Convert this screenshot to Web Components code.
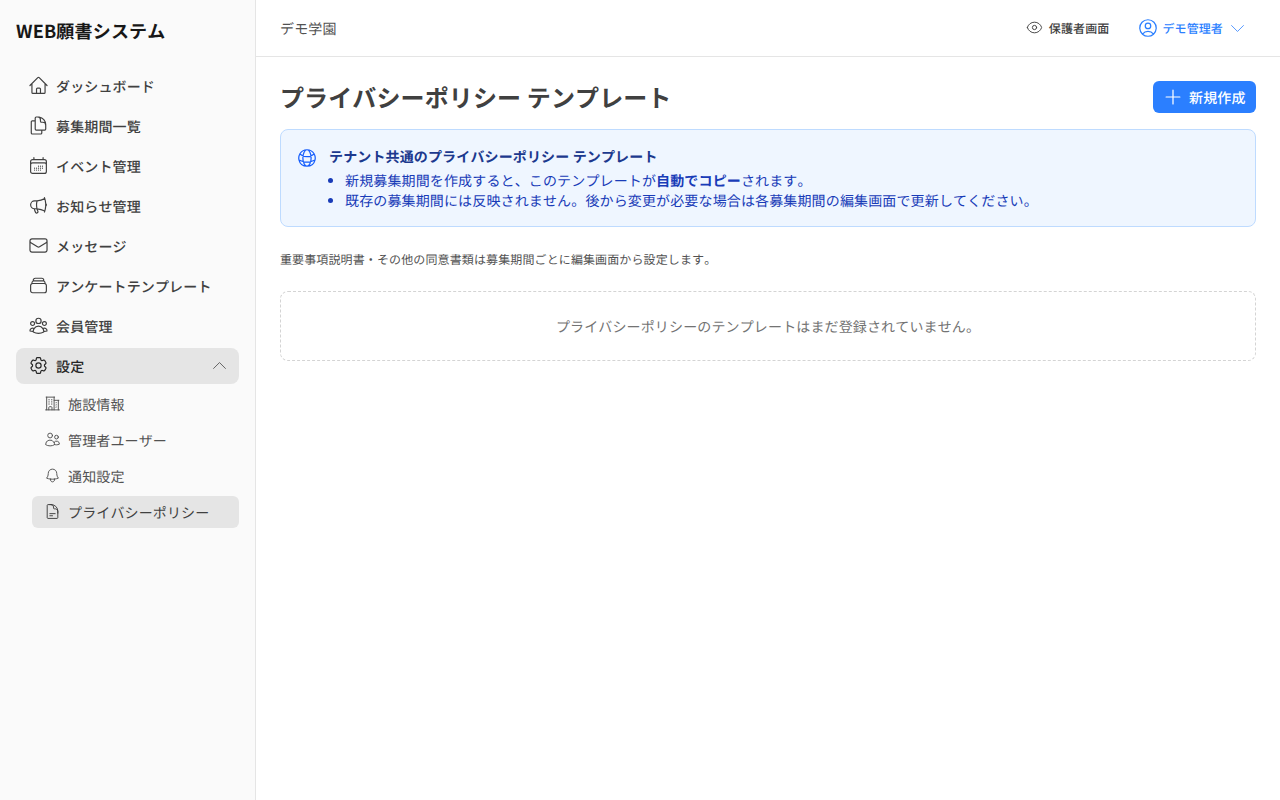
<!DOCTYPE html>
<html lang="ja"><head><meta charset="utf-8"><title>WEB願書システム</title>
<style>
html,body{margin:0;height:100%;background:#fff;font-family:"Noto Sans CJK JP","Noto Sans",sans-serif;color:#404040;font-kerning:none;text-rendering:geometricPrecision;text-spacing-trim:space-all}
</style></head><body>
<app-shell>
  <side-bar slot="side"></side-bar>
  <top-bar slot="top"></top-bar>
  <page-title slot="main"></page-title>
  <info-box slot="main"></info-box>
  <hint-text slot="main"></hint-text>
  <empty-box slot="main"></empty-box>
</app-shell>
<script>
const ic=(body,size=18,sw=1.35)=>`<svg xmlns="http://www.w3.org/2000/svg" width="${size}" height="${size}" viewBox="0 0 24 24" fill="none" stroke="currentColor" stroke-width="${sw}" stroke-linecap="round" stroke-linejoin="round">${body}</svg>`;
const P={
home:'<path d="m2.25 12 8.954-8.955c.44-.439 1.152-.439 1.591 0L21.75 12M4.5 9.75v10.125c0 .621.504 1.125 1.125 1.125H9.75v-4.875c0-.621.504-1.125 1.125-1.125h2.25c.621 0 1.125.504 1.125 1.125V21h4.125c.621 0 1.125-.504 1.125-1.125V9.75M8.25 21h8.25"/>',
docs:'<path d="M15.75 17.25v3.375c0 .621-.504 1.125-1.125 1.125h-9.75a1.125 1.125 0 0 1-1.125-1.125V7.875c0-.621.504-1.125 1.125-1.125H6.75a9.06 9.06 0 0 1 1.5.124m7.5 10.376h3.375c.621 0 1.125-.504 1.125-1.125V11.25c0-4.46-3.243-8.161-7.5-8.876a9.06 9.06 0 0 0-1.5-.124H9.375c-.621 0-1.125.504-1.125 1.125v3.5m7.5 10.375H9.375a1.125 1.125 0 0 1-1.125-1.125v-9.25m12 6.625v-1.875a3.375 3.375 0 0 0-3.375-3.375h-1.5a1.125 1.125 0 0 1-1.125-1.125v-1.5a3.375 3.375 0 0 0-3.375-3.375H9.75"/>',
cal:'<path d="M6.75 3v2.25M17.25 3v2.25M3 18.75V7.5a2.25 2.25 0 0 1 2.25-2.25h13.5A2.25 2.25 0 0 1 21 7.5v11.25m-18 0A2.25 2.25 0 0 0 5.25 21h13.5A2.25 2.25 0 0 0 21 18.75m-18 0v-7.5A2.25 2.25 0 0 1 5.25 9h13.5A2.25 2.25 0 0 1 21 11.25v7.5m-9-6h.008v.008H12v-.008ZM12 15h.008v.008H12V15Zm0 2.25h.008v.008H12v-.008ZM9.75 15h.008v.008H9.75V15Zm0 2.25h.008v.008H9.75v-.008ZM7.5 15h.008v.008H7.5V15Zm0 2.25h.008v.008H7.5v-.008Zm6.75-4.5h.008v.008h-.008v-.008Zm0 2.25h.008v.008h-.008V15Zm0 2.25h.008v.008h-.008v-.008Zm2.25-4.5h.008v.008H16.5v-.008Zm0 2.25h.008V15H16.5V15Z"/>',
mega:'<path d="M10.34 15.84c-.688-.06-1.386-.09-2.09-.09H7.5a4.5 4.5 0 1 1 0-9h.75c.704 0 1.402-.03 2.09-.09m0 9.18c.253.962.584 1.892.985 2.783.247.55.06 1.21-.463 1.511l-.657.38c-.551.318-1.26.117-1.527-.461a20.845 20.845 0 0 1-1.44-4.282m3.102.069a18.03 18.03 0 0 1-.59-4.59c0-1.586.205-3.124.59-4.59m0 9.18a23.848 23.848 0 0 1 8.835 2.535M10.34 6.66a23.847 23.847 0 0 0 8.835-2.535m0 0A23.74 23.74 0 0 0 18.795 3m.38 1.125a23.91 23.91 0 0 1 1.014 5.395m-1.014 8.855c-.118.38-.245.754-.38 1.125m.38-1.125a23.91 23.91 0 0 0 1.014-5.395m0-3.46c.495.413.811 1.035.811 1.73 0 .695-.316 1.317-.811 1.73m0-3.46a24.347 24.347 0 0 1 0 3.46"/>',
mail:'<path d="M21.75 6.75v10.5a2.25 2.25 0 0 1-2.25 2.25h-15a2.25 2.25 0 0 1-2.25-2.25V6.75m19.5 0A2.25 2.25 0 0 0 19.5 4.5h-15a2.25 2.25 0 0 0-2.25 2.25m19.5 0v.243a2.25 2.25 0 0 1-1.07 1.916l-7.5 4.615a2.25 2.25 0 0 1-2.36 0L3.32 8.91a2.25 2.25 0 0 1-1.07-1.916V6.75"/>',
stack:'<path d="M6 6.878V6a2.25 2.25 0 0 1 2.25-2.25h7.5A2.25 2.25 0 0 1 18 6v.878m-12 0c.235-.083.487-.128.75-.128h10.5c.263 0 .515.045.75.128m-12 0A2.25 2.25 0 0 0 4.5 9v.878m13.5-3A2.25 2.25 0 0 1 19.5 9v.878m0 0a2.246 2.246 0 0 0-.75-.128H5.25c-.263 0-.515.045-.75.128m15 0A2.25 2.25 0 0 1 21 12v6a2.25 2.25 0 0 1-2.25 2.25H5.25A2.25 2.25 0 0 1 3 18v-6c0-.98.626-1.813 1.5-2.122"/>',
group:'<path d="M18 18.72a9.094 9.094 0 0 0 3.741-.479 3 3 0 0 0-4.682-2.72m.94 3.198.001.031c0 .225-.012.447-.037.666A11.944 11.944 0 0 1 12 21c-2.17 0-4.207-.576-5.963-1.584A6.062 6.062 0 0 1 6 18.719m12 0a5.971 5.971 0 0 0-.941-3.197m0 0A5.995 5.995 0 0 0 12 12.75a5.995 5.995 0 0 0-5.058 2.772m0 0a3 3 0 0 0-4.681 2.72 8.986 8.986 0 0 0 3.74.477m.94-3.197a5.971 5.971 0 0 0-.94 3.197M15 6.75a3 3 0 1 1-6 0 3 3 0 0 1 6 0Zm6 3a2.25 2.25 0 1 1-4.5 0 2.25 2.25 0 0 1 4.5 0Zm-13.5 0a2.25 2.25 0 1 1-4.5 0 2.25 2.25 0 0 1 4.5 0Z"/>',
gear:'<path d="M9.594 3.94c.09-.542.56-.94 1.11-.94h2.593c.55 0 1.02.398 1.11.94l.213 1.281c.063.374.313.686.645.87.074.04.147.083.22.127.325.196.72.257 1.075.124l1.217-.456a1.125 1.125 0 0 1 1.37.49l1.296 2.247a1.125 1.125 0 0 1-.26 1.431l-1.003.827c-.293.241-.438.613-.43.992a7.723 7.723 0 0 1 0 .255c-.008.378.137.75.43.991l1.004.827c.424.35.534.955.26 1.43l-1.298 2.247a1.125 1.125 0 0 1-1.369.491l-1.217-.456c-.355-.133-.75-.072-1.076.124a6.47 6.47 0 0 1-.22.128c-.331.183-.581.495-.644.869l-.213 1.281c-.09.543-.56.94-1.11.94h-2.594c-.55 0-1.019-.398-1.11-.94l-.213-1.281c-.062-.374-.312-.686-.644-.87a6.52 6.52 0 0 1-.22-.127c-.325-.196-.72-.257-1.076-.124l-1.217.456a1.125 1.125 0 0 1-1.369-.49l-1.297-2.247a1.125 1.125 0 0 1 .26-1.431l1.004-.827c.292-.24.437-.613.43-.991a6.932 6.932 0 0 1 0-.255c.007-.38-.138-.751-.43-.992l-1.004-.827a1.125 1.125 0 0 1-.26-1.43l1.297-2.247a1.125 1.125 0 0 1 1.37-.491l1.216.456c.356.133.751.072 1.076-.124.072-.044.146-.086.22-.128.332-.183.582-.495.644-.869l.214-1.28Z"/><path d="M15 12a3 3 0 1 1-6 0 3 3 0 0 1 6 0Z"/>',
build:'<path d="M2.25 21h19.5m-18-18v18m10.5-18v18m6-13.5V21M6.75 6.75h.75m-.75 3h.75m-.75 3h.75m3-6h.75m-.75 3h.75m-.75 3h.75M6.75 21v-3.375c0-.621.504-1.125 1.125-1.125h2.25c.621 0 1.125.504 1.125 1.125V21M3 3h12m-.75 4.5H21m-3.75 3.75h.008v.008h-.008v-.008Zm0 3h.008v.008h-.008v-.008Zm0 3h.008v.008h-.008v-.008Z"/>',
users:'<path d="M15 19.128a9.38 9.38 0 0 0 2.625.372 9.337 9.337 0 0 0 4.121-.952 4.125 4.125 0 0 0-7.533-2.493M15 19.128v-.003c0-1.113-.285-2.16-.786-3.07M15 19.128v.106A12.318 12.318 0 0 1 8.624 21c-2.331 0-4.512-.645-6.374-1.766l-.001-.109a6.375 6.375 0 0 1 11.964-3.07M12 6.375a3.375 3.375 0 1 1-6.75 0 3.375 3.375 0 0 1 6.75 0Zm8.25 2.25a2.625 2.625 0 1 1-5.25 0 2.625 2.625 0 0 1 5.25 0Z"/>',
bell:'<path d="M14.857 17.082a23.848 23.848 0 0 0 5.454-1.31A8.967 8.967 0 0 1 18 9.75V9A6 6 0 0 0 6 9v.75a8.967 8.967 0 0 1-2.312 6.022c1.733.64 3.56 1.085 5.455 1.31m5.714 0a24.255 24.255 0 0 1-5.714 0m5.714 0a3 3 0 1 1-5.714 0"/>',
file:'<path d="M19.5 14.25v-2.625a3.375 3.375 0 0 0-3.375-3.375h-1.5A1.125 1.125 0 0 1 13.5 7.125v-1.5a3.375 3.375 0 0 0-3.375-3.375H8.25m0 12.75h7.5m-7.5 3H12M10.5 2.25H5.625c-.621 0-1.125.504-1.125 1.125v17.25c0 .621.504 1.125 1.125 1.125h12.75c.621 0 1.125-.504 1.125-1.125V11.25a9 9 0 0 0-9-9Z"/>',
eye:'<path d="M2.036 12.322a1.012 1.012 0 0 1 0-.639C3.423 7.51 7.36 4.5 12 4.5c4.638 0 8.573 3.007 9.963 7.178.07.207.07.431 0 .639C20.577 16.49 16.64 19.5 12 19.5c-4.638 0-8.573-3.007-9.963-7.178Z"/><path d="M15 12a3 3 0 1 1-6 0 3 3 0 0 1 6 0Z"/>',
user:'<path d="M17.982 18.725A7.488 7.488 0 0 0 12 15.75a7.488 7.488 0 0 0-5.982 2.975m11.963 0a9 9 0 1 0-11.963 0m11.963 0A8.966 8.966 0 0 1 12 21a8.966 8.966 0 0 1-5.982-2.275M15 9.75a3 3 0 1 1-6 0 3 3 0 0 1 6 0Z"/>',
down:'<path d="m19.5 8.25-7.5 7.5-7.5-7.5"/>',
up:'<path d="m4.5 15.75 7.5-7.5 7.5 7.5"/>',
plus:'<path d="M12 4.5v15m7.5-7.5h-15"/>',
globe:'<path d="M12 21a9.004 9.004 0 0 0 8.716-6.747M12 21a9.004 9.004 0 0 1-8.716-6.747M12 21c2.485 0 4.5-4.03 4.5-9S14.485 3 12 3m0 18c-2.485 0-4.5-4.03-4.5-9S9.515 3 12 3m0 0a8.997 8.997 0 0 1 7.843 4.582M12 3a8.997 8.997 0 0 0-7.843 4.582m15.686 0A11.953 11.953 0 0 1 12 10.5c-2.998 0-5.74-1.1-7.843-2.918m15.686 0A8.959 8.959 0 0 1 21 12c0 .778-.099 1.533-.284 2.253m0 0A17.919 17.919 0 0 1 12 16.5c-3.162 0-6.133-.815-8.716-2.247m0 0A9.015 9.015 0 0 1 3 12c0-1.605.42-3.113 1.157-4.418"/>'
};
const def=(n,html)=>customElements.define(n,class extends HTMLElement{constructor(){super();this.attachShadow({mode:'open'}).innerHTML=typeof html==='function'?html(this):html}});

def('app-shell',`<style>
:host{display:flex;width:100%;height:100vh;min-height:800px;overflow:hidden}
.side{display:block;flex:none;width:256px}
.right{flex:1;min-width:0;display:flex;flex-direction:column}
main{display:flex;flex-direction:column;padding:24px}
</style>
<div class="side"><slot name="side"></slot></div>
<div class="right"><slot name="top"></slot><main><slot name="main"></slot></main></div>`);

def('nav-item',el=>{const a=n=>el.getAttribute(n);const active=el.hasAttribute('active');return `<style>
:host{display:flex;align-items:center;height:36px;padding:0 12px 0 11.5px;gap:7.5px;border-radius:8px;font-size:14px;line-height:20px;letter-spacing:.14px;font-weight:500;color:#404040;${active?'background:#e5e5e5;color:#262626;':''}box-sizing:border-box}
svg{flex:none;display:block;margin-bottom:1px}
.t{flex:1;white-space:nowrap;padding-top:2px}
.c{color:#525252;display:flex;margin-right:-1.5px}
</style>${ic(P[a('icon')],21)}<span class="t"><slot></slot></span>${a('chev')?`<span class="c">${ic(P.up,19,1.1)}</span>`:''}`});

def('sub-item',el=>{const active=el.hasAttribute('active');return `<style>
:host{display:flex;align-items:center;height:32px;padding:0 12px;gap:7px;border-radius:6px;font-size:14px;line-height:20px;letter-spacing:.14px;font-weight:400;color:#525252;box-sizing:border-box;${active?'background:#e5e5e5;color:#404040;':''}}
svg{flex:none;display:block;margin-bottom:1px}
span{white-space:nowrap;padding-top:2px}
</style>${ic(P[el.getAttribute('icon')],17)}<span><slot></slot></span>`});

def('side-bar',`<style>
:host{display:flex;flex-direction:column;box-sizing:border-box;width:256px;height:100vh;background:#fafafa;border-right:1px solid #e5e5e5;padding:16px 16px 0}
h1{margin:1px 0 -1px;font-size:18px;line-height:28px;letter-spacing:.18px;font-weight:700;color:#171717;white-space:nowrap}
nav{display:flex;flex-direction:column;gap:4px;margin-top:24px}
.sub{display:flex;flex-direction:column;gap:4px;margin-left:16px}
</style>
<h1>WEB願書システム</h1>
<nav>
<nav-item icon="home">ダッシュボード</nav-item>
<nav-item icon="docs">募集期間一覧</nav-item>
<nav-item icon="cal">イベント管理</nav-item>
<nav-item icon="mega">お知らせ管理</nav-item>
<nav-item icon="mail">メッセージ</nav-item>
<nav-item icon="stack">アンケートテンプレート</nav-item>
<nav-item icon="group">会員管理</nav-item>
<nav-item icon="gear" active chev="1">設定</nav-item>
<div class="sub">
<sub-item icon="build">施設情報</sub-item>
<sub-item icon="users">管理者ユーザー</sub-item>
<sub-item icon="bell">通知設定</sub-item>
<sub-item icon="file" active>プライバシーポリシー</sub-item>
</div>
</nav>`);

def('top-bar',`<style>
:host{display:flex;align-items:center;justify-content:space-between;box-sizing:border-box;height:57px;border-bottom:1px solid #e5e5e5;padding:0 24px;background:#fff;flex:none}
.org{font-size:14px;line-height:20px;letter-spacing:.14px;color:#525252;padding-top:2px}
.r{display:flex;align-items:center}
.a{display:flex;align-items:center;font-size:12px;line-height:16px;letter-spacing:.12px;font-weight:500;white-space:nowrap}
.a>span.x{padding-top:2px}
.v{color:#404040;gap:6px;margin-right:28px}
.v svg{margin-bottom:1px}
.u{color:#2b7fff;gap:3px;margin-right:9px}
svg{display:block;flex:none}
.ch{margin-left:2px;display:flex}
</style>
<span class="org">デモ学園</span>
<div class="r">
<span class="a v">${ic(P.eye,17)}<span class="x">保護者画面</span></span>
<span class="a u">${ic(P.user,22)}<span class="x">デモ管理者</span><span class="ch">${ic(P.down,19,1)}</span></span>
</div>`);

def('page-title',`<style>
:host{display:flex;align-items:center;justify-content:space-between;height:32px;margin-bottom:16px}
h2{margin:0;font-size:24px;font-weight:700;letter-spacing:.12px;color:#404040;white-space:nowrap;line-height:32px}
button{all:unset;box-sizing:border-box;display:flex;align-items:center;gap:5px;height:32px;width:103px;padding:0 10px 0 9px;background:#2b7fff;color:#fff;border-radius:6px;font-size:14px;line-height:20px;letter-spacing:.14px;font-weight:500;white-space:nowrap}
button span{padding-top:2px}
svg{display:block;flex:none}
</style><h2>プライバシーポリシー テンプレート</h2><button>${ic(P.plus,22)}<span>新規作成</span></button>`);

def('info-box',`<style>
:host{display:flex;gap:11px;box-sizing:border-box;height:98px;border:1px solid #bedbff;background:#eff6ff;border-radius:8px;padding:16px 15px}
.i{color:#155dfc;flex:none;padding-top:1px}
svg{display:block}
.b{font-size:14px;line-height:20px;letter-spacing:.14px;color:#193cb8;padding-top:1px}
.t{font-weight:700;color:#1c398e;margin-bottom:4px}
ul{margin:0;padding:0 0 0 16px}
b{font-weight:700}
</style>
<span class="i">${ic(P.globe,22)}</span>
<div class="b"><div class="t">テナント共通のプライバシーポリシー テンプレート</div>
<ul><li>新規募集期間を作成すると、このテンプレートが<b>自動でコピー</b>されます。</li>
<li>既存の募集期間には反映されません。後から変更が必要な場合は各募集期間の編集画面で更新してください。</li></ul></div>`);

def('hint-text',`<style>
:host{display:block;font-size:12px;line-height:16px;letter-spacing:.12px;color:#525252;margin-top:25px}
</style>重要事項説明書・その他の同意書類は募集期間ごとに編集画面から設定します。`);

def('empty-box',`<style>
:host{display:flex;align-items:center;justify-content:center;box-sizing:border-box;height:70px;margin-top:23px;padding-top:2px;border:1px dashed #d4d4d4;border-radius:8px;font-size:14px;line-height:20px;letter-spacing:.14px;color:#737373}
</style>プライバシーポリシーのテンプレートはまだ登録されていません。`);
</script>
</body></html>
